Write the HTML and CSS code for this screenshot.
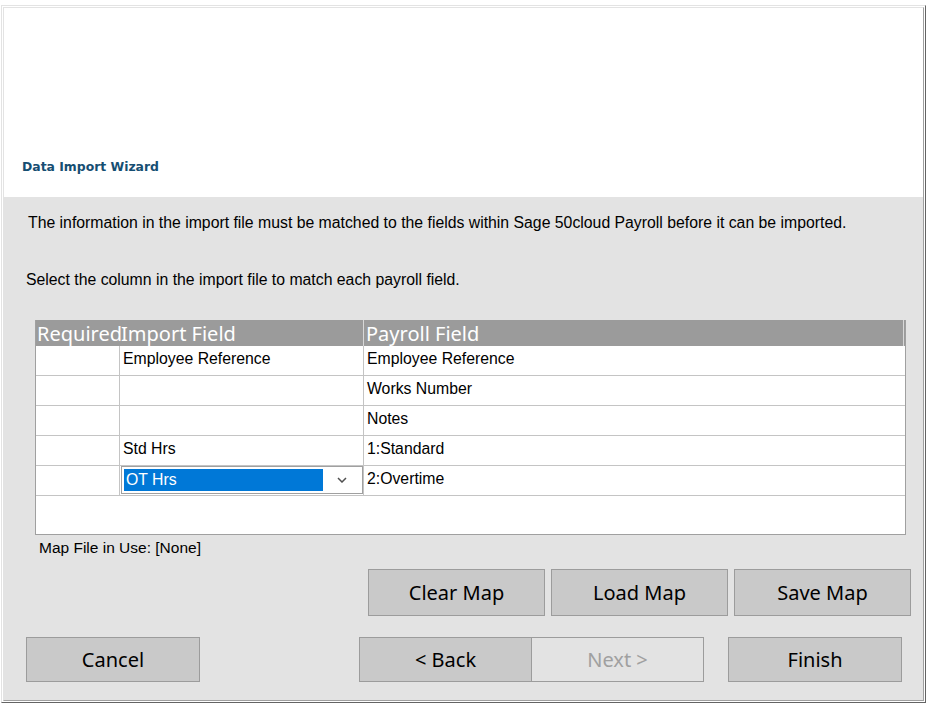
FILE: index.html
```html
<!DOCTYPE html>
<html>
<head>
<meta charset="utf-8">
<link rel="stylesheet" href="styles.css">
</head>
<body>
<div class="window">
  <div class="inner">
    <div class="header">
      <div class="title">Data Import Wizard</div>
    </div>
    <div class="content">
      <div class="intro">The information in the import file must be matched to the fields within Sage 50cloud Payroll before it can be imported.</div>
      <div class="select">Select the column in the import file to match each payroll field.</div>
      <div class="grid">
        <div class="row head">
          <div class="c1">Required</div>
          <div class="c2">Import Field</div>
          <div class="c3">Payroll Field</div>
        </div>
        <div class="row">
          <div class="c1"></div>
          <div class="c2">Employee Reference</div>
          <div class="c3">Employee Reference</div>
        </div>
        <div class="row">
          <div class="c1"></div>
          <div class="c2"></div>
          <div class="c3">Works Number</div>
        </div>
        <div class="row">
          <div class="c1"></div>
          <div class="c2"></div>
          <div class="c3">Notes</div>
        </div>
        <div class="row">
          <div class="c1"></div>
          <div class="c2">Std Hrs</div>
          <div class="c3">1:Standard</div>
        </div>
        <div class="row">
          <div class="c1"></div>
          <div class="c2 combo-cell">
            <div class="combo">
              <span class="combo-sel">OT Hrs</span>
              <svg class="chev" width="10" height="6" viewBox="0 0 10 6"><polyline points="1,1 5,5 9,1" fill="none" stroke="#505050" stroke-width="1.5"/></svg>
            </div>
          </div>
          <div class="c3">2:Overtime</div>
        </div>
      </div>
      <div class="mapfile">Map File in Use: [None]</div>
      <div class="maprow">
        <button class="btn map">Clear Map</button>
        <button class="btn map">Load Map</button>
        <button class="btn map">Save Map</button>
      </div>
      <div class="navrow">
        <button class="btn cancel">Cancel</button>
        <div class="pair">
          <button class="btn nav">&lt; Back</button>
          <button class="btn nav disabled">Next &gt;</button>
        </div>
        <button class="btn finish">Finish</button>
      </div>
    </div>
  </div>
</div>
</body>
</html>
```
FILE: styles.css
```css
html, body {
  margin: 0;
  padding: 0;
  background: #ffffff;
}
body {
  font-family: "Liberation Sans", Arial, sans-serif;
}
.window {
  margin: 5px 0 0 1px;
  width: 925px;
  height: 698px;
  box-sizing: border-box;
  border: 1px solid;
  border-color: #e3e3e3 #646464 #646464 #e3e3e3;
  padding: 0;
  display: flex;
  flex-direction: column;
}
.inner {
  flex: 1;
  margin: 1px;
  border: 1px solid;
  border-color: #e3e3e3 #a0a0a0 #a0a0a0 #e3e3e3;
  display: flex;
  flex-direction: column;
}
.header {
  height: 189px;
  background: #ffffff;
  display: flex;
  align-items: flex-end;
  padding: 0 0 23px 18px;
  box-sizing: border-box;
}
.title {
  font-family: "DejaVu Sans", Verdana, sans-serif;
  font-weight: bold;
  font-size: 12.4px;
  color: #164e72;
}
.content {
  flex: 1;
  background: #e3e3e3;
  display: flex;
  flex-direction: column;
}
.intro {
  font-size: 15.8px;
  color: #000;
  margin: 17px 0 0 24px;
  line-height: 18px;
}
.select {
  font-size: 15.8px;
  color: #000;
  margin: 39px 0 0 22px;
  line-height: 18px;
}
.grid {
  margin: 31px 0 0 31px;
  width: 871px;
  height: 215px;
  box-sizing: border-box;
  background: #ffffff;
  border: 1px solid #a0a0a0;
  border-top: none;
  display: flex;
  flex-direction: column;
}
.row {
  display: flex;
  height: 30px;
  border-bottom: 1px solid #c4c4c4;
  box-sizing: border-box;
  font-size: 15.8px;
}
.row > div {
  box-sizing: border-box;
  display: flex;
  align-items: center;
  padding: 0 0 4px 3px;
  border-right: 1px solid #c4c4c4;
}
.row .c1 { width: 84px; }
.row .c2 { width: 244px; }
.row .c3 { flex: 1; border-right: none; }
.row.head {
  height: 26px;
  background: #9b9b9b;
  border-bottom: none;
  font-family: "Noto Sans", "Open Sans", sans-serif;
  font-size: 20px;
  color: #ffffff;
}
.row.head > div {
  padding: 2px 0 0 2px;
  border-right: 1px solid #d8d8d8;
  line-height: 24px;
  white-space: nowrap;
}
.row.head .c1 { border-right: none; width: 84px; padding-left: 1px; }
.row.head .c2 { padding-left: 1px; }
.row.head .c3 { border-right: 1px solid #d8d8d8; margin-right: 1px; }
.row .combo-cell {
  padding: 0 0 0 1px;
  align-items: stretch;
}
.combo {
  flex: 1;
  margin: 0 0 1px 0;
  border: 1px solid #a0a0a0;
  display: flex;
  align-items: center;
  padding: 2px;
  background: #fff;
}
.combo-sel {
  width: 197px;
  height: 22px;
  background: #0078d7;
  color: #ffffff;
  display: flex;
  align-items: center;
  padding-left: 2px;
}
.chev {
  margin-left: 14px;
}
.mapfile {
  font-size: 15.5px;
  margin: 5px 0 0 35px;
  line-height: 16px;
}
.maprow {
  display: flex;
  margin: 13px 0 0 364px;
  gap: 6px;
}
.btn {
  font-family: "Noto Sans", "Open Sans", sans-serif;
  font-size: 20px;
  color: #000;
  background: #c9c9c9;
  border: 1px solid #9c9c9c;
  box-sizing: border-box;
  padding: 0;
  margin: 0;
}
.btn.map {
  width: 177px;
  height: 47px;
}
.navrow {
  display: flex;
  margin: 21px 0 0 22px;
  align-items: flex-start;
}
.btn.cancel {
  width: 174px;
  height: 45px;
}
.pair {
  display: flex;
  margin-left: 159px;
}
.btn.nav {
  width: 173px;
  height: 45px;
}
.btn.nav.disabled {
  width: 172px;
  background: #e3e3e3;
  color: #a0a0a0;
  border-left: none;
}
.btn.finish {
  width: 174px;
  height: 45px;
  margin-left: 24px;
}
```
